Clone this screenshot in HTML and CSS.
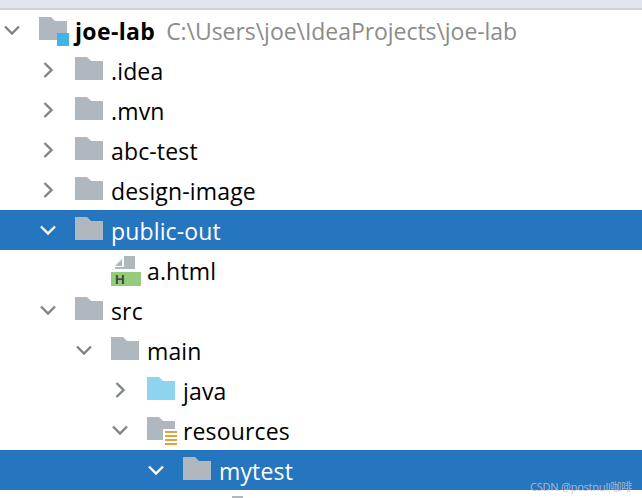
FILE: index.html
```html
<!DOCTYPE html>
<html lang="en">
<head>
<meta charset="utf-8">
<title>Project tree</title>
<link rel="stylesheet" href="styles.css">
</head>
<body>
<svg class="defs" width="0" height="0" aria-hidden="true">
  <defs>
    <symbol id="open" viewBox="0 0 18 18"><path d="M2 5.5 9 12.5 16 5.5" fill="none" stroke="currentColor" stroke-width="2.4"/></symbol>
    <symbol id="closed" viewBox="0 0 18 18"><path d="M5.5 2 12.5 9 5.5 16" fill="none" stroke="currentColor" stroke-width="2.4"/></symbol>
    <symbol id="folder" viewBox="0 0 28 23"><path d="M0 0H12L16 4H28V23H0Z" fill="currentColor"/></symbol>
    <symbol id="html" viewBox="0 0 30 30"><path d="M13 0H24V13H4V11H13Z" fill="#afb8bf"/><path d="M4 10 11 3V10Z" fill="#afb8bf"/><rect y="16" width="30" height="14" fill="#95cc7c"/></symbol>
  </defs>
</svg>
<div class="topbar"></div>
<main class="tree">
  <div class="row d0">
    <svg class="chev"><use href="#open"/></svg>
    <span class="icon"><svg class="folder"><use href="#folder"/></svg><i class="badge-module"></i></span>
    <span class="name strong">joe-lab</span><span class="path">C:\Users\joe\IdeaProjects\joe-lab</span>
  </div>
  <div class="row d1"><svg class="chev"><use href="#closed"/></svg><span class="icon"><svg class="folder"><use href="#folder"/></svg></span><span class="name">.idea</span></div>
  <div class="row d1"><svg class="chev"><use href="#closed"/></svg><span class="icon"><svg class="folder"><use href="#folder"/></svg></span><span class="name">.mvn</span></div>
  <div class="row d1"><svg class="chev"><use href="#closed"/></svg><span class="icon"><svg class="folder"><use href="#folder"/></svg></span><span class="name">abc-test</span></div>
  <div class="row d1"><svg class="chev"><use href="#closed"/></svg><span class="icon"><svg class="folder"><use href="#folder"/></svg></span><span class="name">design-image</span></div>
  <div class="row d1 selected"><svg class="chev"><use href="#open"/></svg><span class="icon"><svg class="folder"><use href="#folder"/></svg></span><span class="name">public-out</span></div>
  <div class="row d2">
    <span class="chev-gap"></span>
    <span class="icon"><svg class="file"><use href="#html"/></svg><b class="file-tag">H</b></span>
    <span class="name">a.html</span>
  </div>
  <div class="row d1"><svg class="chev"><use href="#open"/></svg><span class="icon"><svg class="folder"><use href="#folder"/></svg></span><span class="name">src</span></div>
  <div class="row d2"><svg class="chev"><use href="#open"/></svg><span class="icon"><svg class="folder"><use href="#folder"/></svg></span><span class="name">main</span></div>
  <div class="row d3"><svg class="chev"><use href="#closed"/></svg><span class="icon"><svg class="folder java"><use href="#folder"/></svg></span><span class="name">java</span></div>
  <div class="row d3"><svg class="chev"><use href="#open"/></svg><span class="icon"><svg class="folder"><use href="#folder"/></svg><i class="badge-res"></i></span><span class="name">resources</span></div>
  <div class="row d4 selected"><svg class="chev"><use href="#open"/></svg><span class="icon"><svg class="folder"><use href="#folder"/></svg></span><span class="name">mytest</span></div>
  <div class="row d5">
    <span class="chev-gap"></span>
    <span class="icon"><svg class="file"><use href="#html"/></svg></span>
  </div>
</main>
<div class="watermark">CSDN @postnull咖啡</div>
</body>
</html>
```
FILE: styles.css
```css
* { box-sizing: border-box; }
html, body { margin: 0; height: 100%; }
body {
  width: 642px;
  height: 498px;
  overflow: hidden;
  position: relative;
  background: #fff;
  color: #000;
  font-family: "Open Sans", "Noto Sans", sans-serif;
  font-size: 23px;
}
.defs { position: absolute; }
.topbar {
  height: 10px;
  background: #e1e5ee;
  border-bottom: 2px solid #d1d1d1;
}
.tree {
  height: 488px;
  overflow: hidden;
}
.row {
  height: 40px;
  display: flex;
  align-items: center;
  white-space: nowrap;
}
.d0 { padding-left: 3px; }
.d1 { padding-left: 39px; }
.d2 { padding-left: 75px; }
.d3 { padding-left: 111px; }
.d4 { padding-left: 147px; }
.d5 { padding-left: 183px; }
.chev { width: 18px; height: 18px; color: #7f8487; flex: none; }
.chev-gap { width: 18px; flex: none; }
.icon {
  position: relative;
  width: 28px;
  height: 23px;
  margin: 0 8px 3px 18px;
  flex: none;
}
.folder { display: block; width: 28px; height: 23px; color: #afb8bf; }
.folder.java { color: #8ed4ee; }
.badge-module {
  position: absolute;
  left: 18px;
  top: 16px;
  width: 12px;
  height: 13px;
  background: #3fb5e6;
}
.badge-res {
  position: absolute;
  left: 18px;
  top: 14px;
  width: 12px;
  height: 14px;
  background: repeating-linear-gradient(#dfa23f 0 2px, #fff 2px 4px);
  box-shadow: -2px -2px 0 #fff;
}
.file { position: absolute; left: 0; top: -1px; width: 30px; height: 30px; }
.file-tag {
  position: absolute;
  left: 4px;
  top: 16px;
  font: bold 13.5px/13px "Liberation Sans", sans-serif;
  color: #3d4a36;
}
.name { line-height: 40px; letter-spacing: 0.15px; position: relative; top: 0.5px; }
.name.strong { font-weight: 700; letter-spacing: 0.35px; }
.path { color: #8c8c8c; margin-left: 11px; letter-spacing: -0.05px; position: relative; top: 0.5px; }
.selected { background: #2675bf; color: #fff; }
.selected .chev { color: #fff; }
.watermark {
  position: absolute;
  left: 530px;
  top: 480px;
  font: 11px/14px "Noto Sans", "Noto Sans CJK SC", sans-serif;
  letter-spacing: -0.25px;
  color: rgba(190, 195, 205, 0.85);
}
```
